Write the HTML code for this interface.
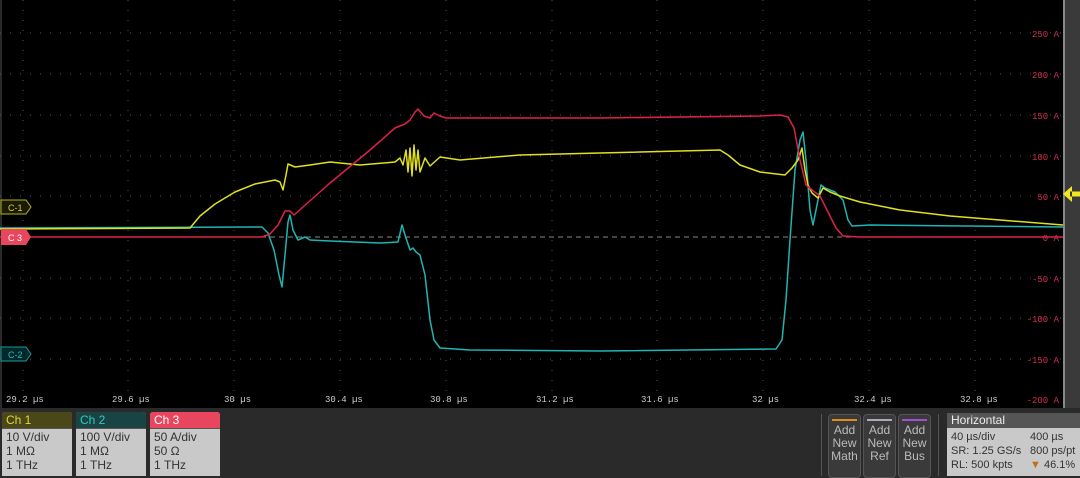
<!DOCTYPE html>
<html><head><meta charset="utf-8"><style>
html,body{margin:0;padding:0;background:#2a2a2a;width:1080px;height:476px;overflow:hidden;font-family:"Liberation Sans",sans-serif}
.abs{position:absolute}
.box{position:absolute;top:412px;width:70px;height:64px;background:#c9c9c9;border-radius:3px 3px 0 0;overflow:hidden}
.box .h{height:16px;font-size:12px;line-height:16px;padding-left:4px}
.box .b{font-size:12px;color:#333;line-height:14px;padding:1px 0 0 4px;border-top:1px solid #555}
.btn{position:absolute;top:414px;width:31px;height:62px;background:#3a3a3a;border:1px solid #555;border-radius:4px;color:#bbb;font-size:12px;text-align:center;line-height:13px}
.btn i{display:block;height:2px;margin:4px 3px 3px}
</style></head><body>
<div class="abs" style="left:2px;top:0;width:1061px;height:408px;background:#000"></div>
<div class="abs" style="left:1063px;top:0;width:17px;height:408px;background:#3a3a3a;border-left:2px solid #888"></div>
<svg class="abs" style="left:0;top:0" width="1080" height="410">
<g stroke="#555" stroke-width="1" stroke-dasharray="1,9">
<line x1="23" y1="0" x2="23" y2="408"/><line x1="128" y1="0" x2="128" y2="408"/><line x1="234" y1="0" x2="234" y2="408"/><line x1="340" y1="0" x2="340" y2="408"/><line x1="446" y1="0" x2="446" y2="408"/><line x1="552" y1="0" x2="552" y2="408"/><line x1="657" y1="0" x2="657" y2="408"/><line x1="763" y1="0" x2="763" y2="408"/><line x1="869" y1="0" x2="869" y2="408"/><line x1="975" y1="0" x2="975" y2="408"/>
<line x1="0" y1="33" x2="1063" y2="33"/><line x1="0" y1="74" x2="1063" y2="74"/><line x1="0" y1="115" x2="1063" y2="115"/><line x1="0" y1="156" x2="1063" y2="156"/><line x1="0" y1="196" x2="1063" y2="196"/><line x1="0" y1="278" x2="1063" y2="278"/><line x1="0" y1="318" x2="1063" y2="318"/><line x1="0" y1="359" x2="1063" y2="359"/>
</g>
<line x1="0" y1="237" x2="1063" y2="237" stroke="#888" stroke-dasharray="5,4"/>
<g font-size="9" fill="#ccc" font-family="Liberation Mono,monospace">
<text x="6" y="402">29.2 µs</text><text x="112" y="402">29.6 µs</text><text x="224" y="402">30 µs</text><text x="325" y="402">30.4 µs</text><text x="430" y="402">30.8 µs</text><text x="536" y="402">31.2 µs</text><text x="641" y="402">31.6 µs</text><text x="752" y="402">32 µs</text><text x="854" y="402">32.4 µs</text><text x="960" y="402">32.8 µs</text>
</g>
<g font-size="9" fill="#d0304a" font-family="Liberation Mono,monospace" text-anchor="end">
<text x="1059" y="37">250 A</text><text x="1059" y="78">200 A</text><text x="1059" y="119">150 A</text><text x="1059" y="160">100 A</text><text x="1059" y="200">50 A</text><text x="1059" y="241">0 A</text><text x="1059" y="282">-50 A</text><text x="1059" y="322">-100 A</text><text x="1059" y="363">-150 A</text><text x="1059" y="403">-200 A</text>
</g>
<g fill="none" stroke-width="1.5" stroke-linejoin="round">
<polyline stroke="#1fb5b5" points="0,228 262,227 268,233 274,250 279,275 282,287 285,255 288,222 290,215 293,230 298,240 305,237 310,240 330,241 380,243 398,242 402,225 405,235 410,250 413,248 416,252 420,255 425,275 430,320 434,340 440,348 470,350 600,351 776,349 782,340 786,300 790,240 795,170 800,140 803,132 806,160 810,210 813,225 817,205 821,185 825,188 835,192 843,200 848,220 852,226 870,225 1063,227"/>
<polyline stroke="#e0e020" points="0,229 190,228 200,216 215,204 235,192 255,184 275,180 280,182 283,190 286,175 288,164 295,167 310,165 330,162 360,165 395,162 400,158 403,165 406,150 408,172 410,148 412,176 414,145 416,170 418,150 420,172 425,158 430,166 440,157 460,160 520,155 600,153 720,150 728,155 740,165 760,172 785,175 792,168 798,160 802,148 805,170 808,185 812,193 818,198 823,188 830,192 840,196 860,202 900,210 950,216 1000,220 1063,225"/>
<polyline stroke="#e0204a" points="0,237 262,237 270,234 278,225 285,211 290,211 294,215 330,183 370,150 395,128 405,124 410,120 415,112 418,109 424,116 430,118 434,113 440,116 446,118 600,118 760,116 780,115 788,117 794,128 800,160 806,185 812,190 820,196 828,212 836,228 843,236 860,237 1063,237"/>
</g>
<path d="M1072,186 L1063,194 L1072,202 Z M1070,191.5 h10 v5 h-10z" fill="#f0e820"/>
<g font-size="9" font-family="Liberation Sans,sans-serif">
<path d="M1,200 h25 l5,7 l-5,7 h-25z" fill="#1a1a00" stroke="#b8b020"/><text x="8" y="211" fill="#d8d040">C-1</text>
<path d="M1,229 h25 l5,8 l-5,8 h-25z" fill="#e8455f"/><text x="8" y="241" fill="#fff">C 3</text>
<path d="M1,347 h25 l5,7 l-5,7 h-25z" fill="#002828" stroke="#1a9a9a"/><text x="8" y="358" fill="#1fc0c0">C-2</text>
</g>
</svg>
<div class="box" style="left:2px"><div class="h" style="background:#4a4718;color:#e0d840">Ch 1</div><div class="b">10 V/div<br>1 MΩ<br>1 THz</div></div>
<div class="box" style="left:76px"><div class="h" style="background:#1a4444;color:#30c8c8">Ch 2</div><div class="b">100 V/div<br>1 MΩ<br>1 THz</div></div>
<div class="box" style="left:150px"><div class="h" style="background:#e8455f;color:#fff">Ch 3</div><div class="b">50 A/div<br>50 Ω<br>1 THz</div></div>
<div class="abs" style="left:821px;top:414px;width:1px;height:62px;background:#555"></div>
<div class="btn" style="left:828px"><i style="background:#e08a20"></i>Add<br>New<br>Math</div>
<div class="btn" style="left:863px"><i style="background:#aab"></i>Add<br>New<br>Ref</div>
<div class="btn" style="left:898px"><i style="background:#a050d0"></i>Add<br>New<br>Bus</div>
<div class="abs" style="left:938px;top:414px;width:1px;height:62px;background:#555"></div>
<div class="abs" style="left:947px;top:413px;width:133px;height:63px;background:#c9c9c9;border-radius:3px 0 0 0">
<div style="background:#555;color:#eee;font-size:12px;line-height:15px;padding-left:4px">Horizontal</div>
<div style="font-size:11px;color:#333;line-height:14px;padding:2px 0 0 4px;position:relative">40 µs/div<br>SR: 1.25 GS/s<br>RL: 500 kpts
<div style="position:absolute;left:83px;top:2px;white-space:nowrap">400 µs<br>800 ps/pt<br><span style="color:#c07010">▼</span> 46.1%</div></div>
</div>
</body></html>
